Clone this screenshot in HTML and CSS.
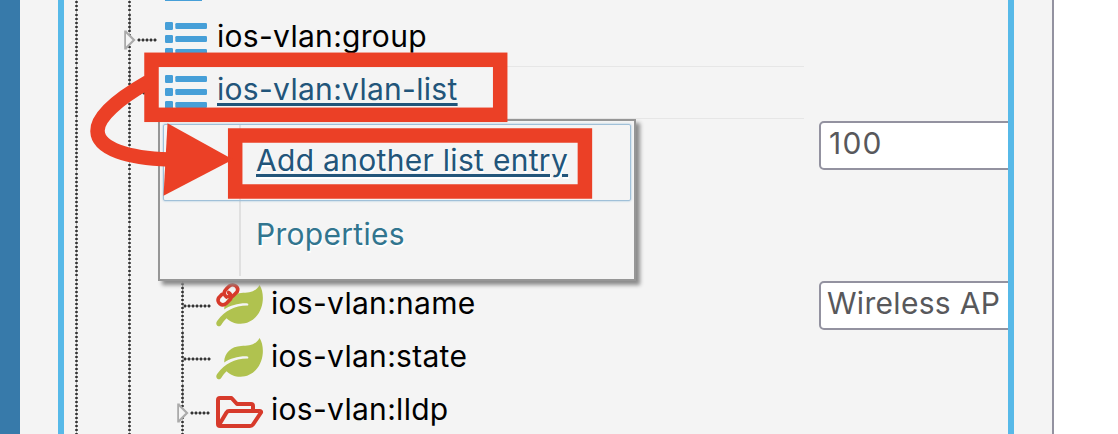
FILE: index.html
```html
<!DOCTYPE html>
<html lang="en">
<head>
<meta charset="utf-8">
<title>VLAN list</title>
<link rel="stylesheet" href="styles.css">
</head>
<body>
<svg class="defs" width="0" height="0">
  <symbol id="list" viewBox="0 0 42 34">
    <path d="M0 1.2Q0 0 1.2 0H6.8Q8 0 8 1.2V6.8Q8 8 6.8 8H1.2Q0 8 0 6.8ZM0 14.2Q0 13 1.2 13H6.8Q8 13 8 14.2V19.8Q8 21 6.8 21H1.2Q0 21 0 19.8ZM0 27.2Q0 26 1.2 26H6.8Q8 26 8 27.2V32.8Q8 34 6.8 34H1.2Q0 34 0 32.8Z"/>
    <rect x="10.3" y="1" width="31.7" height="6" rx="1.3"/><rect x="10.3" y="14" width="31.7" height="6" rx="1.3"/><rect x="10.3" y="27" width="31.7" height="6" rx="1.3"/>
  </symbol>
  <symbol id="leaf" viewBox="0 0 48 44">
    <path d="M43.6 1C46 5 47.2 10 46.8 16C46 29 37 39.8 24.500 39.800C18.500 39.800 14 37.300 10.600 34.200C8.500 36 7 38 5.200 41C4 43 1.500 42.500.7 41C-.2 39.300.3 38 1.500 36.500C9 27 18 21.700 31.500 21.600C32.600 21.500 32.600 19.500 31.500 19.400C22.500 19 14.500 21.500 8.200 25.500C8 16 15.500 9.300 25 9C33 8.700 39 8.600 43.600 1Z"/>
  </symbol>
  <symbol id="arrow" viewBox="0 0 12 20"><path d="M1.500 .5V19.500" stroke-width="2.600"/><path d="M2 2L10 10L2 18" stroke-width="2.200"/></symbol>
</svg>

<div class="app">
  <div class="sidebar"></div>
  <main class="panel">
    <div class="tree">
      <div class="row cut"><span class="guide"></span><span class="branch"></span><span class="sliver"></span></div>
      <div class="row"><span class="guide"></span><span class="branch joint"><svg class="toggle"><use href="#arrow"/></svg><i class="dots closed"></i></span><svg class="list"><use href="#list"/></svg><span class="label group">ios-vlan:group</span></div>
      <div class="row ruled"><span class="guide"></span><span class="branch joint"><i class="dots"></i></span><svg class="list"><use href="#list"/></svg><a class="label link">ios-vlan:vlan-list</a></div>
      <div class="row"><span class="guide"></span><span class="guide"></span></div>
      <div class="row"><span class="guide"></span><span class="guide"></span></div>
      <div class="row"><span class="guide"></span><span class="guide"></span></div>
      <div class="row"><span class="guide"></span><span class="guide"></span><span class="branch deep joint"><i class="dots"></i></span><span class="node"><svg class="leaf"><use href="#leaf"/></svg><svg class="chain" viewBox="0 0 24 24"><g fill="none" stroke="#d73a2b" stroke-width="3.600" stroke-linecap="round"><path d="M10.500 14C6.500 10.500 8 8.500 11 5.300L13.300 3C17.500-.2 23.500 4 21.200 8.800L17 13C15.500 14.400 14 14.200 12.800 13.300"/><path d="M12.500 9.500C16.500 12.500 15.500 15.500 13 17.800L10 20.700C6 24 .2 19.500 2.700 14.700L6 11.300"/></g></svg></span><span class="label name">ios-vlan:name</span></div>
      <div class="row"><span class="guide"></span><span class="guide"></span><span class="branch deep joint"><i class="dots"></i></span><span class="node"><svg class="leaf"><use href="#leaf"/></svg></span><span class="label state">ios-vlan:state</span></div>
      <div class="row"><span class="guide"></span><span class="guide"></span><span class="branch deep joint"><svg class="toggle"><use href="#arrow"/></svg><i class="dots closed"></i></span><span class="node"><svg class="folder" viewBox="0 0 48 34"><g fill="none" stroke="#d73a2b" stroke-width="4" stroke-linejoin="round" stroke-linecap="round"><path d="M37 14V10Q37 8 35 8H21L15.500 2H4Q2 2 2 4V28Q2 30 4 30H34Q36 30 37 28.500L45 16.500Q45.500 15 43.500 15H13Q11.500 15 10.500 16.500L3 29"/></g></svg></span><span class="label lldp">ios-vlan:lldp</span></div>
    </div>
    <div class="values">
      <div class="field number">100</div>
      <div class="field wireless">Wireless AP</div>
    </div>
  </main>
</div>

<nav class="menu">
  <a class="item active"><span>Add another list entry</span></a>
  <a class="item"><span>Properties</span></a>
</nav>

<svg class="marks" viewBox="0 0 1118 434">
  <g fill="none" stroke="#eb4026" stroke-width="14.500">
    <rect x="151.500" y="59.800" width="348.700" height="55"/>
    <rect x="235.200" y="135.500" width="349.700" height="56"/>
    <path d="M148 82C118 99 97 117 97.500 131C98 149 128 158 169 159.500"/>
  </g>
  <path fill="#eb4026" d="M167.500 123.300L233 159.500L163.500 195.700Z"/>
</svg>
</body>
</html>
```
FILE: styles.css
```css
* { box-sizing: border-box; }
body { margin: 0; width: 1118px; height: 434px; overflow: hidden; background: #fff; font: 30px/29px Inter, sans-serif; letter-spacing: 0.3px; color: #000; }
.defs { position: absolute; }
.app { width: 1054px; height: 434px; display: flex; gap: 38px; background: #f4f4f4; border-right: 2px solid #9392a0; }
.sidebar { width: 20px; background: #377aaa; }
.panel { width: 956px; display: flex; overflow: hidden; border: solid #57b9e8; border-width: 0 6px; }
.tree { width: 740px; flex: none; }
.row { height: 53px; display: flex; align-items: flex-start; }
.cut { height: 13px; }
.ruled {
  background: linear-gradient(#e6e6e6, #e6e6e6) 100px 0 / 640px 1px no-repeat,
    linear-gradient(#e6e6e6, #e6e6e6) 100px 52px / 640px 1px no-repeat;
}
.guide, .branch {
  flex: none; width: 53px; height: 100%;
  background: radial-gradient(circle at 1.5px 2px, #333 0 0.9px, transparent 1.8px) 11px 0 / 3px 4px repeat-y;
}
.branch { display: flex; width: 48px; }
.deep { width: 46px; }
.joint {
  background: radial-gradient(circle at 1.5px 2px, #333 0 0.9px, transparent 1.8px) 11px 0 / 3px 4px repeat-y,
    linear-gradient(#3335, #3335) 12px 0 / 1.5px 18px no-repeat;
}
.toggle { width: 12px; height: 20px; margin: 17px 0 0 7px; fill: #f4f4f4; stroke: #aaa; }
.deep .toggle { margin-top: 19px; }
.dots { width: 28px; height: 4px; margin: 25px 0 0 13px; background: radial-gradient(circle at 2px 2px, #333 0 1px, transparent 2px) 0 0 / 4px 4px repeat-x; }
.dots.closed { width: 20px; margin-left: 1px; }
.deep .dots { margin-top: 26px; }
.deep .closed { margin-top: 27px; }
.list { width: 42px; height: 34px; margin-top: 9px; fill: #469fd8; flex: none; }
.sliver { width: 37px; height: 1px; background: #469fd8; }
.label { margin: 9px 0 0 10px; white-space: nowrap; }
.link { color: #22557a; text-decoration: underline; text-decoration-thickness: 2.5px; text-underline-offset: 3px; text-decoration-skip-ink: auto; }
.node { position: relative; width: 46px; flex: none; }
.node + .label { margin: 11px 0 0 9px; }
.leaf { display: block; width: 48px; height: 44px; margin-top: 6px; fill: #b0c24f; }
.chain { position: absolute; left: 0; top: 5px; width: 24px; height: 24px; overflow: visible; }
.folder { display: block; width: 48px; height: 34px; margin-top: 12px; }
.values { flex: none; padding: 121px 0 0 15px; display: flex; flex-direction: column; gap: 111px; }
.field { width: 250px; height: 49px; padding: 6px 7px; background: #fff; border: 2px solid #9392a0; border-radius: 5px; color: #58585b; white-space: nowrap; }
.number { padding-left: 8px; letter-spacing: 1.2px; }
.wireless { padding-left: 6px; }
.menu {
  position: absolute; left: 158px; top: 119px; width: 478px; height: 162px; padding: 3px;
  border: 2px solid #969696; box-shadow: 4px 4px 4px #8b8b8b;
  background: linear-gradient(#e0e0e0, #e0e0e0) 79px 3px / 2px 152px no-repeat #f4f4f4;
}
.item { display: flex; height: 77px; padding: 21px 0 0 92px; border: 1px solid transparent; color: #31758f; text-shadow: 1px 2px 0 #fff; white-space: nowrap; }
.active { color: #22557a; border-color: #a0c0d8; border-radius: 2px; box-shadow: 0 0 2px #8db9da; }
.active span { text-decoration: underline; text-decoration-thickness: 2.5px; text-underline-offset: 3px; }
.item + .item { padding-top: 18px; }
.marks { position: absolute; left: 0; top: 0; width: 1118px; height: 434px; pointer-events: none; }
```
